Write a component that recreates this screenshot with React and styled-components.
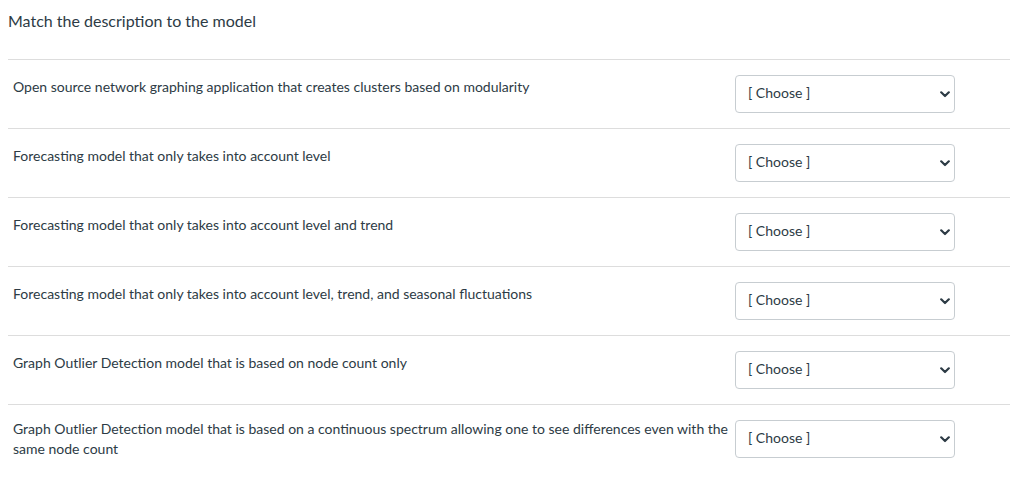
import styled, { createGlobalStyle } from "styled-components";

const questions = [
	"Open source network graphing application that creates clusters based on modularity",
	"Forecasting model that only takes into account level",
	"Forecasting model that only takes into account level and trend",
	"Forecasting model that only takes into account level, trend, and seasonal fluctuations",
	"Graph Outlier Detection model that is based on node count only",
	"Graph Outlier Detection model that is based on a continuous spectrum allowing one to see differences even with the same node count",
];

export default function App() {
	return (
		<>
			<GlobalStyle />
			<Page>
				<Header>
					<Title>Match the description to the model</Title>
				</Header>
				{questions.map((text, index) => (
					<Row key={index}>
						<Description $multi={text.length > 100}>{text}</Description>
						<SelectWrap>
							<Select defaultValue="">
								<option value="">[ Choose ]</option>
							</Select>
							<Chevron width="10" height="7" viewBox="0 0 10 7">
								<path
									d="M1.2 1.3 L5 5 L8.8 1.3"
									fill="none"
									stroke="#2d3b45"
									strokeWidth="2.2"
									strokeLinecap="round"
									strokeLinejoin="round"
								/>
							</Chevron>
						</SelectWrap>
					</Row>
				))}
			</Page>
		</>
	);
}

const GlobalStyle = createGlobalStyle`
	body {
		margin: 0;
		background: #ffffff;
		font-family: Lato, "Open Sans", sans-serif;
		color: #2d3b45;
	}
`;

const Page = styled.div`
	padding-left: 8px;
	width: 1002px;
	overflow: hidden;
`;

const Header = styled.div`
	padding: 9px 0 26px 0;
`;

const Title = styled.h2`
	margin: 0;
	font-size: 16px;
	font-weight: 400;
	line-height: 24px;
	color: #2d3b45;
`;

const Row = styled.div`
	display: flex;
	align-items: flex-start;
	border-top: 1px solid #dddddd;
	padding: 14px 0 15px 5px;
	width: 1010px;
`;

const Description = styled.div`
	width: 718px;
	margin-top: ${(p) => (p.$multi ? "0" : "3px")};
	font-size: 14px;
	line-height: 20px;
	color: #2d3b45;
`;

const SelectWrap = styled.div`
	position: relative;
	margin-top: 1px;
	margin-left: 4px;
`;

const Select = styled.select`
	appearance: none;
	-webkit-appearance: none;
	width: 220px;
	height: 38px;
	padding: 0 20px 3px 12px;
	border: 1px solid #c7cdd1;
	border-radius: 4px;
	background: #ffffff;
	font-family: Lato, "Open Sans", sans-serif;
	font-size: 14px;
	color: #2d3b45;
	outline: none;
`;

const Chevron = styled.svg`
	position: absolute;
	right: 5px;
	top: 16px;
	pointer-events: none;
`;
